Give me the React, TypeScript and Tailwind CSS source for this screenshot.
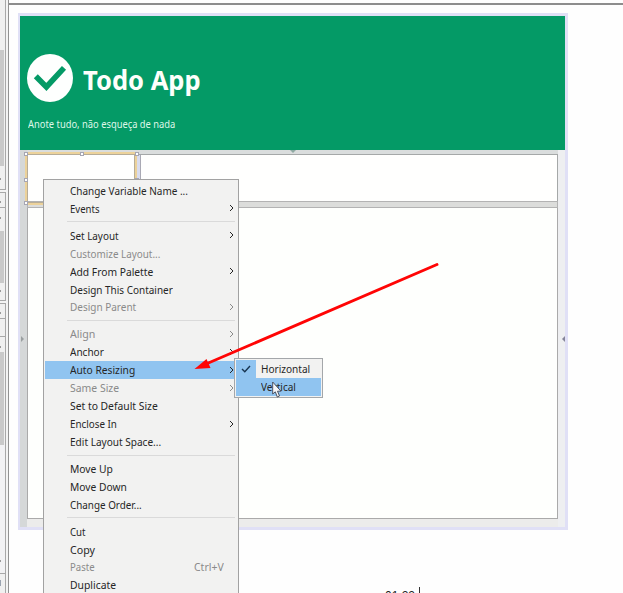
import React from "react";

type Item = { label: string; sub?: boolean; off?: boolean; active?: boolean; keys?: string; w: number };

const groups: Item[][] = [
  [
    { label: "Change Variable Name ...", w: 118 },
    { label: "Events", sub: true, w: 30 },
  ],
  [
    { label: "Set Layout", sub: true, w: 49 },
    { label: "Customize Layout...", off: true, w: 90 },
    { label: "Add From Palette", sub: true, w: 83 },
    { label: "Design This Container", w: 103 },
    { label: "Design Parent", sub: true, off: true, w: 66 },
  ],
  [
    { label: "Align", sub: true, off: true, w: 25 },
    { label: "Anchor", sub: true, w: 34 },
    { label: "Auto Resizing", sub: true, active: true, w: 65 },
    { label: "Same Size", sub: true, off: true, w: 49 },
    { label: "Set to Default Size", w: 88 },
    { label: "Enclose In", sub: true, w: 47 },
    { label: "Edit Layout Space...", w: 91 },
  ],
  [
    { label: "Move Up", w: 43 },
    { label: "Move Down", w: 57 },
    { label: "Change Order...", w: 72 },
  ],
  [
    { label: "Cut", w: 16 },
    { label: "Copy", w: 25 },
    { label: "Paste", off: true, keys: "Ctrl+V", w: 25 },
    { label: "Duplicate", w: 46 },
  ],
];

function Fit({ text, width }: { text: string; width: number }) {
  const ref = React.useRef<HTMLSpanElement>(null);
  const [scale, setScale] = React.useState(1);
  React.useLayoutEffect(() => {
    if (ref.current) setScale(width / ref.current.offsetWidth);
  }, [width]);
  return (
    <span ref={ref} className="inline-block origin-left whitespace-pre" style={{ transform: `scaleX(${scale})` }}>
      {text}
    </span>
  );
}

function Chevron() {
  return (
    <svg className="h-[8px] w-[5px]" viewBox="0 0 5 8" fill="none" stroke="currentColor" strokeWidth="1">
      <path d="M1 1 L4 4 L1 7" />
    </svg>
  );
}

function MenuRow({ item }: { item: Item }) {
  return (
    <div
      className={`flex h-[17.93px] items-center pl-[25px] pr-[3px] ${item.active ? "bg-[#90c4f0]" : ""} ${
        item.off ? "text-[#8a8a8a]" : "text-[#262626]"
      }`}
    >
      <Fit text={item.label} width={item.w} />
      <span className="grow" />
      {item.keys && <span className="w-[40px]"><Fit text={item.keys} width={30} /></span>}
      {item.sub && <Chevron />}
    </div>
  );
}

function Handle({ pos }: { pos: string }) {
  return <div className={`absolute h-[4px] w-[4px] border border-[#a6a6b2] bg-white ${pos}`} />;
}

function SidePanels() {
  return (
    <div className="flex h-full w-[9px] shrink-0 border-r border-[#929292] bg-[#f4f4f4]">
      <div className="flex w-[6px] flex-col">
        <div className="h-[190px] border-b border-r border-[#a8a8a8] bg-[#f0f0f0] pt-[50px]">
          <div className="h-[116px] w-[4px] bg-[#c9c9c9]" />
          <div className="mt-[12px] h-[2px] w-px bg-[#999]" />
        </div>
        <div className="mt-[2px] h-[109px] border border-l-0 border-[#a8a8a8] bg-[#f0f0f0]">
          <div className="h-[15px] border-b border-[#a8a8a8] pt-[8px]"><div className="h-[2px] w-px bg-[#999]" /></div>
          <div className="h-[23px] pt-[9px]"><div className="h-[2px] w-px bg-[#999]" /></div>
          <div className="h-[52px] w-[4px] bg-[#c9c9c9]" />
          <div className="mt-[7px] h-[2px] w-px bg-[#999]" />
        </div>
        <div className="mt-[2px] grow border border-b-0 border-l-0 border-[#a8a8a8] bg-[#f0f0f0]">
          <div className="h-[15px] border-b border-[#a8a8a8] pt-[8px]"><div className="h-[2px] w-px bg-[#999]" /></div>
          <div className="h-[18px] border-b border-[#a8a8a8]" />
          <div className="h-[15px] pt-[9px]"><div className="h-[2px] w-px bg-[#999]" /></div>
          <div className="h-[93px] w-[4px] bg-[#c9c9c9]" />
          <div className="h-[129px] border-b border-[#a8a8a8] bg-[#f2f2f4] pt-[115px]"><div className="h-[2px] w-px bg-[#999]" /></div>
          <div className="mt-[6px] h-[6px] w-px bg-[#9aa3b0]" />
        </div>
      </div>
    </div>
  );
}

export default function App() {
  return (
    <div className="relative flex h-[593px] w-[623px] overflow-hidden bg-[#fefefe] font-['Noto_Sans','Open_Sans',sans-serif]">
      <SidePanels />
      <main className="flex grow flex-col">
        <div className="mt-[3px] h-[2px] bg-[#8d8d8d]" />
        <div className="ml-[9px] mt-[8px] flex h-[517px] w-[550px] flex-col border-2 border-b-[3px] border-r-[3px] border-t-[3px] border-[#e0e0f6]">
          <header className="h-[134px] shrink-0 bg-[#049a66] pl-[7px] pt-[38px] text-[#fdfffb]">
            <div className="flex h-[48px] items-center">
              <svg className="h-[48px] w-[46px] shrink-0" viewBox="0 0 46 48">
                <ellipse cx="23" cy="24" rx="23" ry="24" fill="#fefffe" />
                <path d="M8.8 22.2 L19.4 33 L37 13.8" fill="none" stroke="#049a66" strokeWidth="5.6" />
              </svg>
              <h1 className="ml-[10px] mt-[3px] text-[27.5px] font-bold leading-[36px]">
                <Fit text="Todo App" width={118} />
              </h1>
            </div>
            <p className="ml-[0.5px] mt-[14px] text-[10.5px] leading-[16px] text-[#dff7e9]">
              <Fit text="Anote tudo, não esqueça de nada" width={147} />
            </p>
          </header>
          <section className="flex grow">
            <div className="flex w-[7px] items-center bg-[#d5d8d8]">
              <div className="ml-px h-0 w-0 border-y-[3px] border-l-[3px] border-y-transparent border-l-[#9a9fa0]" />
            </div>
            <div className="flex w-[531px] flex-col">
              <div className="flex h-[4px] justify-center bg-[#dadddd]">
                <div className="h-0 w-0 border-x-[3px] border-t-[3px] border-x-transparent border-t-[#8faaa3]" />
              </div>
              <div className="flex h-[47px] border border-b-0 border-[#a5a8a8] bg-[#fffffe]">
                <div className="w-[107px]" />
                <div className="w-[6px] border-r border-[#a9a9b4] bg-[#d9dcee]" />
              </div>
              <div className="h-[7px] border border-[#b3b3b3] bg-[#dcdddb]" />
              <div className="grow border border-t-0 border-[#aaa] bg-[#fefffd]" />
              <div className="h-[8px] bg-[#ececeb]" />
            </div>
            <div className="flex w-[7px] items-center justify-end bg-[#eeeff1]">
              <div className="h-0 w-0 border-y-[3px] border-r-[3px] border-y-transparent border-r-[#85859a]" />
            </div>
          </section>
        </div>
      </main>

      <div className="absolute left-[25px] top-[152px] h-[53px] w-[112px] border-2 border-[#ecd29a]">
        <div className="h-full border border-[#b7ad98]" />
        <Handle pos="left-[-3px] top-[-2px]" />
        <Handle pos="left-[53px] top-[-2px]" />
        <Handle pos="right-[-4px] top-[-2px]" />
        <Handle pos="left-[-3px] top-[24px]" />
        <Handle pos="right-[-4px] top-[24px]" />
        <Handle pos="bottom-[-2px] left-[-3px]" />
      </div>

      <div className="absolute left-[43px] top-[179px] w-[196px] border border-b-0 border-[#a2a2a2] bg-[#f2f2f1] px-px pt-[1.6px] text-[11.5px]">
        {groups.map((group, g) => (
          <React.Fragment key={g}>
            {g > 0 && (
              <div className="flex h-[9px] items-center pl-[22px] pr-[2px]">
                <div className="h-px w-full bg-[#dadada]" />
              </div>
            )}
            {group.map((item) => <MenuRow key={item.label} item={item} />)}
          </React.Fragment>
        ))}
      </div>

      <div className="absolute left-[234px] top-[358px] h-[40px] w-[89px] border border-[#a4a7aa] bg-[#f2f2f1] p-px text-[11.5px] text-[#262626]">
        <div className="flex h-[18px] items-center">
          <div className="flex h-full w-[20px] items-center justify-center bg-[#90c4f0]">
            <svg className="h-[8px] w-[10px]" viewBox="0 0 10 8" fill="none" stroke="#17344f" strokeWidth="1.4">
              <path d="M1 4 L3.8 6.8 L9 1" />
            </svg>
          </div>
          <div className="pl-[5px]"><Fit text="Horizontal" width={49} /></div>
        </div>
        <div className="flex h-[18px] items-center bg-[#90c4f0] pl-[25px]"><Fit text="Vertical" width={35} /></div>
      </div>

      <svg className="absolute left-[190px] top-[255px] h-[120px] w-[255px]" viewBox="190 255 255 120">
        <path d="M437 264.5 L206 364" stroke="#ff0505" strokeWidth="2.9" strokeLinecap="round" />
        <path d="M194.5 369 L206.5 359 L210.5 368 Z" fill="#ff0505" />
      </svg>
      <svg className="absolute left-[272px] top-[381px] h-[18px] w-[10px]" viewBox="0 0 10 18">
        <path d="M.7 1 V13 L3.3 10.8 L5.3 16 L7.5 15 L5.5 10.2 H9 Z" fill="#f6f6f8" stroke="#404552" strokeWidth=".9" />
      </svg>

      <div className="absolute left-[385px] top-[587px] flex h-[6px] w-[36px] items-start overflow-hidden font-['Liberation_Sans',sans-serif] text-[12px] leading-[14px] text-[#222]">
        <div className="w-[34px] shrink-0 pt-[2px]"><Fit text="01:22" width={30} /></div>
        <div className="h-[6px] w-px shrink-0 bg-[#333]" />
      </div>
    </div>
  );
}
